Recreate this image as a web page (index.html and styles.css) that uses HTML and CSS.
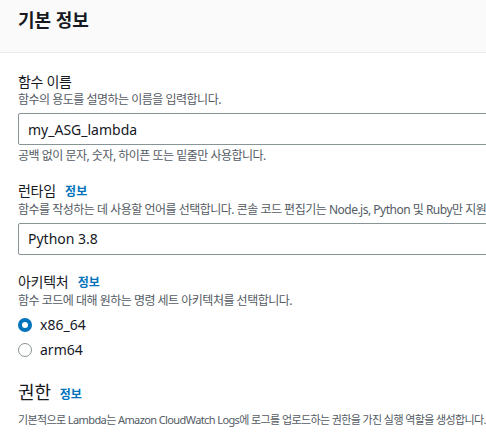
FILE: index.html
```html
<!DOCTYPE html>
<html lang="ko">
<head>
  <meta charset="UTF-8" />
  <meta name="viewport" content="width=device-width, initial-scale=1.0" />
  <title>기본 정보</title>
  <link rel="stylesheet" href="styles.css">
</head>
<body>

  <!-- Panel header -->
  <div class="panel-header">
    <h2>기본 정보</h2>
  </div>

  <div class="panel-body">
    <!-- Function name -->
    <div class="field">
      <label class="field-label" for="fnName">함수 이름</label>
      <p class="field-desc">함수의 용도를 설명하는 이름을 입력합니다.</p>
      <input type="text" id="fnName" class="text-input" value="my_ASG_lambda" />
      <p class="field-hint">공백 없이 문자, 숫자, 하이픈 또는 밑줄만 사용합니다.</p>
    </div>

    <!-- Runtime -->
    <div class="field">
      <div class="field-label">런타임 <a class="info" href="#">정보</a></div>
      <p class="field-desc nowrap">함수를 작성하는 데 사용할 언어를 선택합니다. 콘솔 코드 편집기는 Node.js, Python 및 Ruby만 지원합니다.</p>
      <div class="text-input select">Python 3.8</div>
    </div>

    <!-- Architecture -->
    <div class="field">
      <div class="field-label">아키텍처 <a class="info" href="#">정보</a></div>
      <p class="field-desc">함수 코드에 대해 원하는 명령 세트 아키텍처를 선택합니다.</p>
      <div class="radios">
        <label class="radio checked"><span class="dot"></span>x86_64</label>
        <label class="radio"><span class="dot"></span>arm64</label>
      </div>
    </div>

    <!-- Permissions -->
    <div class="section">
      <h3>권한 <a class="info" href="#">정보</a></h3>
      <p class="section-desc nowrap">기본적으로 Lambda는 Amazon CloudWatch Logs에 로그를 업로드하는 권한을 가진 실행 역할을 생성합니다. 이 기본 역할은 나중에 사용자 지정할 수 있습니다.</p>
    </div>
  </div>

</body>
</html>
```

FILE: styles.css
```css
body {
  font-family: "Noto Sans", "Noto Sans CJK KR", sans-serif;
  background: #ffffff;
  color: #16191f;
  margin: 0;
  overflow: hidden;
}

p {
  margin: 0;
}

.nowrap {
  white-space: nowrap;
}

.panel-header {
  background: #fafafa;
  border-bottom: 1px solid #eaeded;
  height: 53px;
  padding: 8px 18px 0;
  box-sizing: border-box;
}

.panel-header h2 {
  margin: 0;
  font-size: 18px;
  line-height: 24px;
  font-weight: 700;
}

.panel-body {
  padding: 19px 18px 0;
  width: 560px;
}

.field {
  margin-bottom: 17px;
}

.field-label {
  display: block;
  font-size: 14px;
  line-height: 20px;
  letter-spacing: -0.3px;
}

.info {
  color: #0073bb;
  font-size: 12px;
  font-weight: 700;
  text-decoration: none;
  margin-left: 6px;
  letter-spacing: 0;
}

.field-desc {
  font-size: 12px;
  line-height: 16px;
  color: #545b64;
  letter-spacing: -0.5px;
}

.text-input {
  display: block;
  box-sizing: border-box;
  width: 100%;
  height: 32px;
  margin-top: 5px;
  padding: 0 9px;
  font-family: inherit;
  font-size: 14px;
  line-height: 30px;
  color: #16191f;
  border: 1px solid #879596;
  border-radius: 2px;
  background: #ffffff;
}

.field-hint {
  margin-top: 3px;
  font-size: 12px;
  line-height: 16px;
  color: #545b64;
  letter-spacing: -0.5px;
}

.radios {
  margin-top: 3px;
}

.radio {
  display: flex;
  align-items: center;
  gap: 8px;
  height: 25px;
  font-size: 14px;
}

.dot {
  width: 14px;
  height: 14px;
  box-sizing: border-box;
  border: 1px solid #879596;
  border-radius: 50%;
  background: #ffffff;
}

.radio.checked .dot {
  border: 4px solid #0073bb;
}

.section {
  margin-top: 2px;
}

.section h3 {
  margin: 0;
  font-size: 18px;
  line-height: 26px;
  font-weight: 400;
}

.section h3 .info {
  margin-left: 4px;
}

.section-desc {
  margin-top: 4px;
  font-size: 11px;
  line-height: 16px;
  color: #545b64;
  letter-spacing: -0.6px;
}
```
